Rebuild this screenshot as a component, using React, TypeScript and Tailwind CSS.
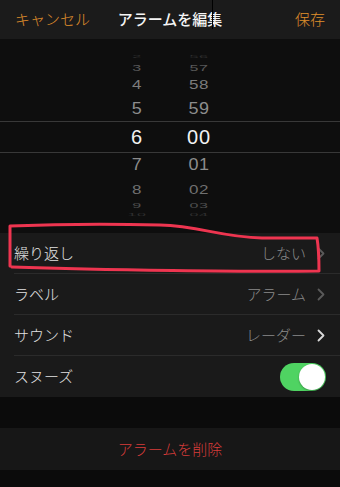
import React from "react";

const jp = { fontFamily: '"Noto Sans CJK JP", "Noto Sans", sans-serif' };

type PRow = { h: string; size: string; color: string; sy: string; a: string; b: string; sel?: boolean };

const rows: PRow[] = [
  { h: "h-[10px]", size: "text-[16px]", color: "text-[#2e2e2e]", sy: "scale-y-[0.2]", a: "2", b: "56" },
  { h: "h-[11px]", size: "text-[16px]", color: "text-[#585858]", sy: "scale-y-[0.6]", a: "3", b: "57" },
  { h: "h-[23px]", size: "text-[17px]", color: "text-[#7c7c7c]", sy: "scale-y-[0.8]", a: "4", b: "58" },
  { h: "h-[25px]", size: "text-[18px]", color: "text-[#8c8c8c]", sy: "scale-y-[0.88]", a: "5", b: "59" },
  { h: "h-[32px]", size: "text-[20px]", color: "text-[#f2f2f2]", sy: "scale-y-100", a: "6", b: "00", sel: true },
  { h: "h-[24px]", size: "text-[18px]", color: "text-[#8c8c8c]", sy: "scale-y-[0.88]", a: "7", b: "01" },
  { h: "h-[24px]", size: "text-[17px]", color: "text-[#707070]", sy: "scale-y-[0.8]", a: "8", b: "02" },
  { h: "h-[10px]", size: "text-[16px]", color: "text-[#4e4e4e]", sy: "scale-y-[0.45]", a: "9", b: "03" },
  { h: "h-[8px]", size: "text-[16px]", color: "text-[#2e2e2e]", sy: "scale-y-[0.2]", a: "10", b: "04" },
];

function Chevron({ color }: { color: string }) {
  return (
    <svg width="8" height="13" viewBox="0 0 8 13" className="ml-[11px]">
      <path d="M1.5 1.5 L6.5 6.5 L1.5 11.5" fill="none" stroke={color} strokeWidth="1.8" strokeLinecap="round" strokeLinejoin="round" />
    </svg>
  );
}

function Row({ label, value, chev, last, children }: { label: string; value?: string; chev?: string; last?: boolean; children?: React.ReactNode }) {
  return (
    <div className="h-[41px] pl-[14px]">
      <div className={`h-full flex items-center pr-[15px] ${last ? "" : "border-b border-[#2b2b2b]"}`}>
        <span className="text-[15px] font-light text-[#e2e2e2] flex-1" style={jp}>{label}</span>
        {value && <span className="text-[15px] font-light text-[#8a8a8a]" style={jp}>{value}</span>}
        {chev && <Chevron color={chev} />}
        {children}
      </div>
    </div>
  );
}

export default function App() {
  return (
    <div className="relative w-[340px] h-[487px] bg-[#0b0b0b] overflow-hidden">
      {/* header */}
      <div className="h-[39px] bg-[#1b1b1b] flex items-center px-[15px]" style={jp}>
        <span className="text-[15px] font-light text-[#e0902c] w-[90px]">キャンセル</span>
        <span className="flex-1 text-center text-[15px] font-medium text-[#f4f4f4] -ml-[10px]">アラームを編集</span>
        <span className="text-[15px] font-light text-[#e0902c] w-[80px] text-right">保存</span>
      </div>

      {/* picker */}
      <div className="h-[194px] bg-[#0e0e0e] pt-[13px]" style={{ fontFamily: '"Liberation Sans", Arial, sans-serif' }}>
        {rows.map((r, i) => (
          <div
            key={i}
            className={`${r.h} flex items-center ${r.sel ? "border-y border-[#383838]" : ""}`}
          >
            <span className={`w-[40px] ml-[117px] text-center leading-none ${r.size} ${r.color} ${r.sy} ${r.sel ? "tracking-[1px]" : "tracking-[0.5px]"}`}>{r.a}</span>
            <span className={`w-[40px] ml-[22px] text-center leading-none ${r.size} ${r.color} ${r.sy} ${r.sel ? "tracking-[1px]" : "tracking-[0.5px]"}`}>{r.b}</span>
          </div>
        ))}
      </div>

      {/* list */}
      <div className="bg-[#1a1a1a]">
        <Row label="繰り返し" value="しない" chev="#5a5a5a" />
        <Row label="ラベル" value="アラーム" chev="#5a5a5a" />
        <Row label="サウンド" value="レーダー" chev="#d8d8d8" />
        <Row label="スヌーズ" last>
          <div className="w-[46px] h-[28px] rounded-full bg-[#4fd362] flex items-center justify-end pr-[1px] mr-[-1px]">
            <div className="w-[26px] h-[26px] rounded-full bg-white shadow-[0_1px_2px_rgba(0,0,0,0.3)]" />
          </div>
        </Row>
      </div>

      {/* gap */}
      <div className="h-[31px]" />

      {/* delete */}
      <div className="h-[42px] bg-[#171717] flex items-center justify-center">
        <span className="text-[15px] font-light text-[#d63c3a]" style={jp}>アラームを削除</span>
      </div>

      {/* artifact line */}
      <div className="absolute left-[212px] top-0 w-[1px] h-[29px] bg-black" />

      {/* red annotation */}
      <svg className="absolute left-0 top-0 pointer-events-none" width="340" height="487" viewBox="0 0 340 487">
        <path
          d="M10 266 L10 226 C60 224 120 224 160 225 C200 226 220 237 262 238 L317 238 C319 250 319 262 319 271 C250 272 100 270 12 267"
          fill="none"
          stroke="#ee3550"
          strokeWidth="3"
          strokeLinecap="round"
          strokeLinejoin="round"
        />
      </svg>
    </div>
  );
}
